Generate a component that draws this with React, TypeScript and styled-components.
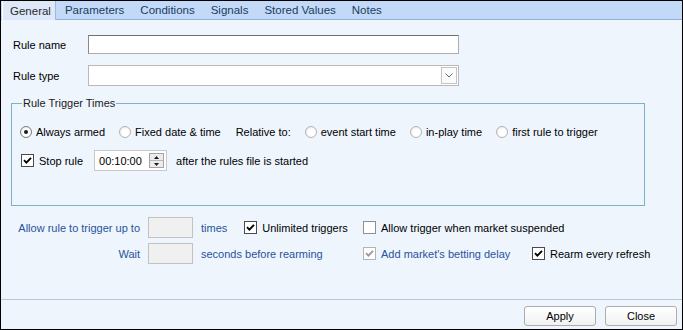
import React from 'react';
import styled, { createGlobalStyle } from 'styled-components';

const GlobalStyle = createGlobalStyle`
  html, body {
    margin: 0;
    padding: 0;
    background: #ffffff;
  }
  * {
    box-sizing: border-box;
  }
`;

const tabs = ['General', 'Parameters', 'Conditions', 'Signals', 'Stored Values', 'Notes'];

const Check: React.FC<{ disabled?: boolean }> = ({ disabled }) => (
  <svg width="9" height="9" viewBox="0 0 9 9">
    <path
      d="M1 4.2 L3.4 6.6 L8 1.8"
      fill="none"
      stroke={disabled ? '#9a9a9a' : '#000000'}
      strokeWidth="1.9"
    />
  </svg>
);

const Chevron: React.FC = () => (
  <svg width="8" height="5" viewBox="0 0 8 5">
    <path d="M0.5 0.5 L4 4 L7.5 0.5" fill="none" stroke="#5f6a78" strokeWidth="1" />
  </svg>
);

const Arrow: React.FC<{ up?: boolean }> = ({ up }) => (
  <svg width="5" height="3" viewBox="0 0 5 3">
    <path d={up ? 'M0 3 L2.5 0 L5 3 Z' : 'M0 0 L2.5 3 L5 0 Z'} fill="#1a1a1a" />
  </svg>
);

const App: React.FC = () => {
  return (
    <>
      <GlobalStyle />
      <Window>
        <TabStrip>
          {tabs.map((t, i) => (
            <Tab key={t} active={i === 0}>
              {t}
            </Tab>
          ))}
        </TabStrip>

        <Body>
          <FieldRow>
            <FieldLabel>Rule name</FieldLabel>
            <TextBox />
          </FieldRow>
          <FieldRow top={11}>
            <FieldLabel>Rule type</FieldLabel>
            <Combo>
              <ComboButton>
                <Chevron />
              </ComboButton>
            </Combo>
          </FieldRow>

          <Group>
            <Legend>Rule Trigger Times</Legend>
            <OptionRow>
              <Option>
                <Radio checked />
                <span>Always armed</span>
              </Option>
              <Option>
                <Radio />
                <span>Fixed date &amp; time</span>
              </Option>
              <Plain>Relative to:</Plain>
              <Option>
                <Radio />
                <span>event start time</span>
              </Option>
              <Option>
                <Radio />
                <span>in-play time</span>
              </Option>
              <Option>
                <Radio />
                <span>first rule to trigger</span>
              </Option>
            </OptionRow>
            <StopRow>
              <Option>
                <Box>
                  <Check />
                </Box>
                <span>Stop rule</span>
              </Option>
              <TimeBox>
                <TimeText>00:10:00</TimeText>
                <Spinner>
                  <SpinHalf>
                    <Arrow up />
                  </SpinHalf>
                  <SpinHalf>
                    <Arrow />
                  </SpinHalf>
                </Spinner>
              </TimeBox>
              <Plain>after the rules file is started</Plain>
            </StopRow>
          </Group>

          <TriggerGrid>
            <BlueLabel>Allow rule to trigger up to</BlueLabel>
            <SmallBox />
            <Cell gap={17}>
              <BlueText>times</BlueText>
              <Option>
                <Box>
                  <Check />
                </Box>
                <span>Unlimited triggers</span>
              </Option>
            </Cell>
            <Cell>
              <Option>
                <Box tone="#8f8f8f" />
                <span>Allow trigger when market suspended</span>
              </Option>
            </Cell>
            <Cell />

            <BlueLabel>Wait</BlueLabel>
            <SmallBox />
            <Cell>
              <BlueText>seconds before rearming</BlueText>
            </Cell>
            <Cell>
              <Option>
                <Box tone="#b4b4b4">
                  <Check disabled />
                </Box>
                <BlueText>Add market&apos;s betting delay</BlueText>
              </Option>
            </Cell>
            <Cell>
              <Option>
                <Box>
                  <Check />
                </Box>
                <span>Rearm every refresh</span>
              </Option>
            </Cell>
          </TriggerGrid>
        </Body>

        <Footer>
          <Button>Apply</Button>
          <Button>Close</Button>
        </Footer>
      </Window>
    </>
  );
};

const Window = styled.div`
  width: 683px;
  height: 330px;
  border: 1px solid #000000;
  background: #eef5fd;
  display: flex;
  flex-direction: column;
  font-family: 'Liberation Sans', Arial, sans-serif;
  font-size: 11px;
  color: #000000;
  overflow: hidden;
`;

const TabStrip = styled.div`
  height: 19px;
  flex: none;
  display: flex;
  align-items: stretch;
  padding-left: 1px;
  background: #c2daf7;
  border-bottom: 1px solid #8eb0d9;
`;

interface ITab {
  active?: boolean;
}
const Tab = styled.div<ITab>`
  display: flex;
  align-items: center;
  padding: ${(p) => (p.active ? '0 4px 0 7px' : '0 7px 0 9px')};
  color: ${(p) => (p.active ? '#2a2a2a' : '#1d3a62')};
  background: ${(p) => (p.active ? '#dde9f9' : 'transparent')};
  border-left: ${(p) => (p.active ? '1px solid #ffffff' : 'none')};
  border-right: ${(p) => (p.active ? '1px solid #9fb9da' : 'none')};
  margin-bottom: ${(p) => (p.active ? '-1px' : '0')};
  font-size: 11.5px;
`;

const Body = styled.div`
  flex: 1;
  padding: 15px 12px 0 12px;
  display: flex;
  flex-direction: column;
  align-items: flex-start;
`;

interface IFieldRow {
  top?: number;
}
const FieldRow = styled.div<IFieldRow>`
  display: flex;
  align-items: center;
  margin-top: ${(p) => p.top || 0}px;
`;

const FieldLabel = styled.div`
  width: 75px;
`;

const TextBox = styled.div`
  width: 371px;
  height: 19px;
  background: #ffffff;
  border: 1px solid #abadb3;
  border-top-color: #707070;
  border-left-color: #8a8a8a;
`;

const Combo = styled.div`
  width: 371px;
  height: 21px;
  background: #ffffff;
  border: 1px solid #b9b9b9;
  display: flex;
  justify-content: flex-end;
  align-items: center;
  padding-right: 1px;
`;

const ComboButton = styled.div`
  width: 16px;
  height: 17px;
  border: 1px solid #c4c4c4;
  background: #fbfbfb;
  display: flex;
  align-items: center;
  justify-content: center;
`;

const Group = styled.fieldset`
  margin: 11px 0 0 -2px;
  width: 634px;
  height: 109px;
  padding: 14px 8px 0 8px;
  border: 1px solid #7db2cd;
  border-radius: 0;
`;

const Legend = styled.legend`
  padding: 0 1px;
  margin-left: 2px;
  line-height: 13px;
  font-size: 11px;
  color: #1a1a1a;
`;

const OptionRow = styled.div`
  display: flex;
  align-items: center;
  height: 16px;
  gap: 14px;
`;

const StopRow = styled.div`
  display: flex;
  align-items: center;
  margin-top: 10px;
  padding-left: 1px;
  gap: 8px;
`;

const Option = styled.label`
  display: flex;
  align-items: center;
  gap: 4px;
  white-space: nowrap;
`;

const Plain = styled.span`
  white-space: nowrap;
  margin-left: 1px;
`;

interface IRadio {
  checked?: boolean;
}
const Radio = styled.span<IRadio>`
  position: relative;
  width: 12px;
  height: 12px;
  flex: none;
  border-radius: 50%;
  border: 1px solid ${(p) => (p.checked ? '#7a7a7a' : '#b3b3b3')};
  background: radial-gradient(circle at 60% 60%, #ffffff 40%, #e3e3e3 100%);

  &::after {
    content: '';
    display: ${(p) => (p.checked ? 'block' : 'none')};
    position: absolute;
    left: 3px;
    top: 3px;
    width: 4px;
    height: 4px;
    border-radius: 50%;
    background: #1c1c1c;
  }
`;

interface IBox {
  tone?: string;
}
const Box = styled.span<IBox>`
  width: 13px;
  height: 13px;
  flex: none;
  border: 1px solid ${(p) => p.tone || '#4a4a4a'};
  background: #ffffff;
  display: flex;
  align-items: center;
  justify-content: center;
  margin-right: 1px;
`;

const TimeBox = styled.div`
  width: 73px;
  height: 21px;
  background: #ffffff;
  border: 1px solid #c9c9c9;
  display: flex;
  align-items: center;
  justify-content: space-between;
  padding: 0 2px 0 4px;
  margin-left: 3px;
`;

const TimeText = styled.span`
  font-size: 11px;
`;

const Spinner = styled.div`
  width: 15px;
  height: 15px;
  display: flex;
  flex-direction: column;
  border: 1px solid #a4a4a4;
  background: #ececec;
`;

const SpinHalf = styled.div`
  flex: 1;
  display: flex;
  align-items: center;
  justify-content: center;
  &:first-child {
    border-bottom: 1px solid #b8b8b8;
  }
`;

const TriggerGrid = styled.div`
  display: grid;
  grid-template-columns: 123px 45px 154px 161px auto;
  column-gap: 8px;
  row-gap: 5px;
  align-items: center;
  margin: 11px 0 0 4px;
`;

const BlueLabel = styled.span`
  justify-self: end;
  white-space: nowrap;
  color: #28539c;
`;

const BlueText = styled.span`
  white-space: nowrap;
  color: #28539c;
`;

const SmallBox = styled.div`
  width: 45px;
  height: 21px;
  background: #f0f0f0;
  border: 1px solid #c2c2c2;
`;

interface ICell {
  gap?: number;
}
const Cell = styled.div<ICell>`
  display: flex;
  align-items: center;
  gap: ${(p) => p.gap || 0}px;
`;

const Footer = styled.div`
  flex: none;
  display: flex;
  justify-content: flex-end;
  gap: 9px;
  padding: 6px 5px 3px 0;
  border-top: 1px solid #b5c7dd;
`;

const Button = styled.button`
  width: 72px;
  height: 20px;
  padding: 0;
  font-family: 'Liberation Sans', Arial, sans-serif;
  font-size: 11px;
  color: #000000;
  background: linear-gradient(#ffffff, #f1f1f1);
  border: 1px solid #adadad;
  border-radius: 3px;
`;

export default App;
